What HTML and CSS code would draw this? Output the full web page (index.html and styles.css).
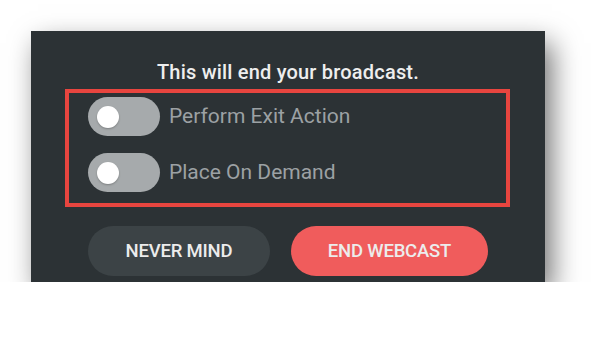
FILE: index.html
```html
<!DOCTYPE html>
<html>
<head>
<meta charset="utf-8">
<link rel="stylesheet" href="styles.css">
</head>
<body>
<div class="panel">
  <div class="title">This will end your broadcast.</div>
  <div class="options">
    <div class="row"><span class="toggle"><span class="knob"></span></span><span class="label">Perform Exit Action</span></div>
    <div class="row"><span class="toggle"><span class="knob"></span></span><span class="label">Place On Demand</span></div>
  </div>
  <div class="actions">
    <button class="btn btn-cancel">NEVER MIND</button>
    <button class="btn btn-end">END WEBCAST</button>
  </div>
</div>
</body>
</html>
```
FILE: styles.css
```css
html, body { margin: 0; padding: 0; background: #ffffff; }
body { font-family: Roboto, "Liberation Sans", sans-serif; }
.panel {
  margin: 31px 0 0 31px;
  width: 514px;
  height: 251px;
  box-sizing: border-box;
  background: #2c3235;
  padding-top: 31px;
  display: flex;
  flex-direction: column;
  box-shadow: 7px 12px 26px rgba(0,0,0,0.55);
}
.title {
  text-align: center;
  color: #eeeeee;
  font-size: 20px;
  font-weight: 500;
  letter-spacing: 0.2px;
  line-height: 20px;
  height: 20px;
  margin-bottom: 7px;
}
.options {
  margin: 0 0 0 34px;
  width: 445px;
  height: 118px;
  box-sizing: border-box;
  border: 4px solid #e8453f;
  padding: 4px 0 0 19px;
  display: flex;
  flex-direction: column;
  gap: 17px;
}
.row { display: flex; align-items: center; gap: 9px; height: 39px; }
.toggle {
  width: 72px; height: 39px; border-radius: 20px;
  background: #a6aaac;
  display: flex; align-items: center;
  padding-left: 9px; box-sizing: border-box;
}
.knob {
  width: 22px; height: 22px; border-radius: 50%;
  background: #ffffff;
  box-shadow: 0 1px 2px rgba(0,0,0,0.25);
}
.label { color: #9ca1a4; font-size: 21px; line-height: 39px; }
.actions {
  margin: 19px 0 0 57px;
  display: flex;
  gap: 21px;
}
.btn {
  height: 50px; border: none; border-radius: 25px;
  font-family: Roboto, "Liberation Sans", sans-serif;
  font-size: 18.5px; font-weight: 500;
  color: #ececec;
  letter-spacing: -0.2px;
  padding: 0;
}
.btn-cancel { width: 182px; background: #3c4346; }
.btn-end { width: 197px; background: #f05c5c; }
```
